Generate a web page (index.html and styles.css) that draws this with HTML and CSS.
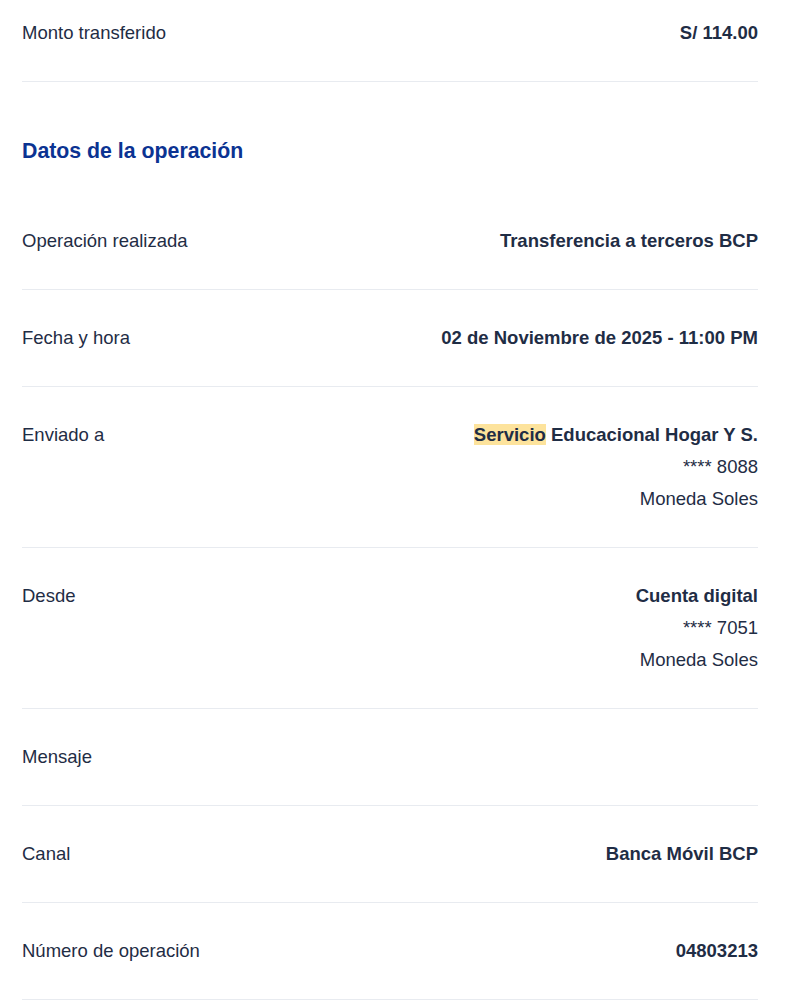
FILE: index.html
```html
<!DOCTYPE html>
<html lang="es">
<head>
<meta charset="utf-8">
<link rel="stylesheet" href="styles.css">
</head>
<body>
<div class="page">
  <div class="row first">
    <div class="label">Monto transferido</div>
    <div class="value"><b>S/ 114.00</b></div>
  </div>
  <h2 class="section-title">Datos de la operación</h2>
  <div class="row">
    <div class="label">Operación realizada</div>
    <div class="value"><b>Transferencia a terceros BCP</b></div>
  </div>
  <div class="row">
    <div class="label">Fecha y hora</div>
    <div class="value"><b>02 de Noviembre de 2025 - 11:00 PM</b></div>
  </div>
  <div class="row">
    <div class="label">Enviado a</div>
    <div class="value">
      <b><span class="hl">Servicio</span> Educacional Hogar Y S.</b>
      <span>**** 8088</span>
      <span>Moneda Soles</span>
    </div>
  </div>
  <div class="row">
    <div class="label">Desde</div>
    <div class="value">
      <b>Cuenta digital</b>
      <span>**** 7051</span>
      <span>Moneda Soles</span>
    </div>
  </div>
  <div class="row">
    <div class="label">Mensaje</div>
    <div class="value"></div>
  </div>
  <div class="row">
    <div class="label">Canal</div>
    <div class="value"><b>Banca Móvil BCP</b></div>
  </div>
  <div class="row">
    <div class="label">Número de operación</div>
    <div class="value"><b>04803213</b></div>
  </div>
</div>
</body>
</html>
```
FILE: styles.css
```css
html, body {
  margin: 0;
  padding: 0;
  background: #ffffff;
}
.page {
  padding: 0 32px 0 22px;
  font-family: "Liberation Sans", Arial, sans-serif;
  font-size: 18.5px;
  color: #1f2d45;
}
.row {
  display: flex;
  justify-content: space-between;
  align-items: flex-start;
  padding: 32px 0;
  line-height: 32px;
  border-bottom: 1px solid #e8ebf0;
}
.row.first {
  padding-top: 17px;
}
.label {
  flex: none;
}
.value {
  display: flex;
  flex-direction: column;
  align-items: flex-end;
  text-align: right;
}
.value b {
  font-weight: 700;
}
.hl {
  background: #fde39c;
}
.section-title {
  margin: 0;
  padding: 57px 0 30px;
  font-size: 21.3px;
  line-height: 24px;
  font-weight: 700;
  color: #0b3392;
}
```
